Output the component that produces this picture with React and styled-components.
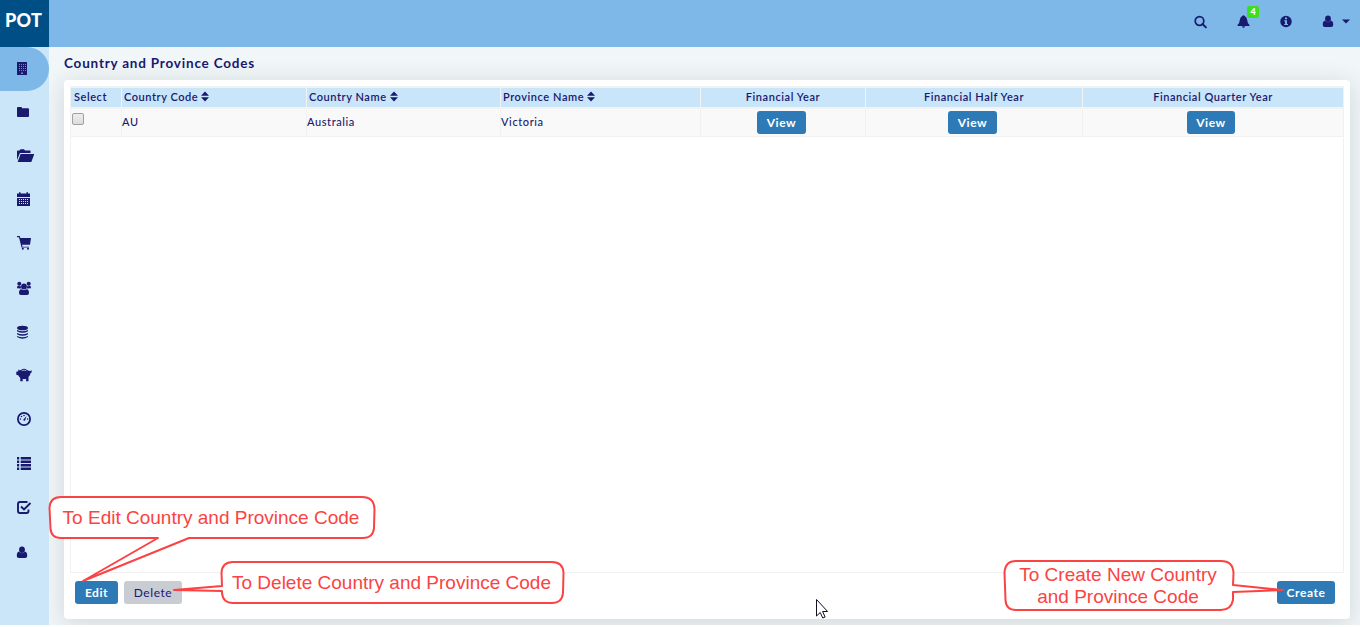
import React from 'react';
import styled, { createGlobalStyle } from 'styled-components';

const navy = '#191970';

const GlobalStyle = createGlobalStyle`
  * { box-sizing: border-box; }
  body { margin: 0; background: #fff; overflow: hidden; }
`;

const Page = styled.div`
  position: relative;
  width: 1360px;
  height: 627px;
  display: flex;
  flex-direction: column;
  overflow: hidden;
  border-bottom: 2px solid #fdfefe;
  font-family: Lato, sans-serif;
  font-size: 11px;
  letter-spacing: 0.6px;
  color: ${navy};
`;

const TopBar = styled.header`
  display: flex;
  flex: none;
  height: 47px;
  background: #7db8e8;
`;

const Brand = styled.div`
  width: 49px;
  padding: 8px 0 0 5px;
  background: #004e86;
  color: #fff;
  font-size: 18px;
  line-height: 24px;
  font-weight: 900;
  letter-spacing: 0.3px;
`;

const Tools = styled.div`
  display: flex;
  margin-left: auto;
  padding: 15px 10px 0 0;
`;

const Tool = styled.div`
  position: relative;
  display: flex;
  height: 14px;
  margin-left: ${(p) => p.$gap}px;
`;

const Badge = styled.span`
  position: absolute;
  left: 10px;
  top: -9px;
  width: 12px;
  height: 12px;
  border-radius: 2px;
  background: #3be01c;
  color: #fff;
  font-size: 9px;
  font-weight: 900;
  line-height: 11px;
  letter-spacing: 0;
  text-align: center;
`;

const Body = styled.div`
  display: flex;
  flex: 1;
  min-height: 0;
`;

const Sidebar = styled.nav`
  flex: none;
  width: 49px;
  background: #cbe6f9;
`;

const NavItem = styled.div`
  display: flex;
  height: 44px;
  padding: ${(p) => p.$top}px 0 0 16px;
  border-radius: 0 22px 22px 0;
  background: ${(p) => (p.$active ? '#7db8e8' : 'transparent')};
`;

const Main = styled.main`
  flex: 1;
  display: flex;
  flex-direction: column;
  padding: 8px 10px 6px 15px;
  background: #f1f6f9;
  overflow: hidden;
`;

const Title = styled.h1`
  margin: 0;
  height: 25px;
  font-size: 13.5px;
  line-height: 17px;
  font-weight: 700;
  letter-spacing: 0.8px;
`;

const Panel = styled.section`
  flex: 1;
  display: flex;
  flex-direction: column;
  padding: 6px 6px 0;
  border-radius: 4px;
  background: #fff;
  box-shadow: 0 4px 24px rgba(40, 60, 40, 0.16);
`;

const Grid = styled.div`
  height: 487px;
  border: 1px solid #f1f1f1;
`;

const Row = styled.div`
  display: grid;
  grid-template-columns: 51px 185px 194px 200px 165px 217px 1fr;
`;

const HeadRow = styled(Row)`
  height: 22px;
  border-top: 1px solid #f3f3f3;
  border-bottom: 2px solid #f3f3f3;
  background: #c9e5f9;
`;

const DataRow = styled(Row)`
  height: 28px;
  border-bottom: 1px solid #f1f1f1;
  background: #f9f9f9;
`;

const HeadCell = styled.div`
  display: flex;
  align-items: center;
  justify-content: ${(p) => (p.$center ? 'center' : 'flex-start')};
  gap: 3px;
  padding: 0 ${(p) => (p.$center ? 2 : 0)}px 2px 2px;
  border-right: 1px solid #f1f4f6;
  font-weight: 600;
  line-height: 17px;
  letter-spacing: 0.56px;
  white-space: nowrap;
  &:first-child { padding-left: 3px; }
  &:last-child { border-right: 0; }
`;

const Cell = styled.div`
  display: flex;
  align-items: ${(p) => (p.$center ? 'flex-start' : 'center')};
  justify-content: ${(p) => (p.$center ? 'center' : 'flex-start')};
  padding: ${(p) => (p.$center ? '2px 3px 0 0' : '0 0 2px')};
  border-right: 1px solid #f1f1f1;
  font-weight: 500;
  &:last-child { border-right: 0; padding-right: 4px; }
`;

const Check = styled.span`
  align-self: flex-start;
  width: 12px;
  height: 12px;
  margin: 4px 0 0 1px;
  border: 1px solid #a0a0a0;
  border-radius: 2px;
  background: linear-gradient(#eee, #dcdcdc);
`;

const Button = styled.button`
  width: ${(p) => p.$width}px;
  height: 23px;
  padding: 0;
  border: 0;
  border-radius: 3px;
  background: ${(p) => (p.$muted ? '#c9ccd3' : '#2e7ab6')};
  color: ${(p) => (p.$muted ? navy : '#fff')};
  font-family: Lato, sans-serif;
  font-size: 12px;
  font-weight: ${(p) => (p.$muted ? 400 : 700)};
  line-height: 23px;
  letter-spacing: 0.55px;
`;

const Actions = styled.div`
  display: flex;
  gap: 6px;
  padding: 8px 9px 0 5px;
  & > :last-child { margin-left: auto; }
`;

const Overlay = styled.svg`
  position: absolute;
  left: 0;
  top: 0;
  pointer-events: none;
`;

const Note = styled.div`
  position: absolute;
  left: ${(p) => p.$x}px;
  top: ${(p) => p.$y}px;
  width: ${(p) => p.$w}px;
  color: #fb4343;
  font-family: 'Liberation Sans', Arial, sans-serif;
  font-size: 19px;
  line-height: 22px;
  letter-spacing: 0;
  text-align: center;
  white-space: nowrap;
`;

const Icon = ({ w = 18, h = 16, children }) => (
  <svg width={w} height={h} viewBox={`0 0 ${w} ${h}`} fill={navy}>{children}</svg>
);

const Person = () => (
  <>
    <ellipse cx="6" cy="3.700" rx="2.900" ry="3.200" />
    <path d="M3.200 5.600C1.500 6 .8 7.400.8 9.700c0 1.500.8 2.200 2.100 2.200h6.200c1.300 0 2.100-.7 2.100-2.200 0-2.300-.7-3.700-2.400-4.100C7.500 7.900 4.500 7.900 3.200 5.600z" />
  </>
);

const nav = [
  [15, <><path d="M1 0h10v13H1z" /><path fill="#5f8fc6" d="M3 2h1v1H3zm2 0h1v1H5zm2 0h1v1H7zm2 0h1v1H9zM3 4h1v1H3zm2 0h1v1H5zm2 0h1v1H7zm2 0h1v1H9zM3 6h1v1H3zm2 0h1v1H5zm2 0h1v1H7zm2 0h1v1H9zM3 8h1v1H3zm2 0h1v1H5zm2 0h1v1H7zm2 0h1v1H9zM5 10.500h2V12H5z" /></>],
  [15, <path d="M1 2q0-1 1-1h3q1 0 1 1v.3h6q1 0 1 1V10q0 1-1 1H2q-1 0-1-1z" />],
  [13, <><path d="M1 3.500q0-1 1-1h1.500l1-1.300h3.500l1 1.300h5.500V5H4L1 12z" /><path d="M4.600 6H18.300l-3 8H1.600z" /></>],
  [13, <><path d="M1 1.500h13V5H1zM3 .3h1.500V3H3zm7.500 0H12V3h-1.500z" /><path fillRule="evenodd" d="M1 6h13v8H1zM3 7v1h1V7zm2 0v1h1V7zm2 0v1h1V7zm2 0v1h1V7zm2 0v1h1V7zM3 9v1h1V9zm2 0v1h1V9zm2 0v1h1V9zm2 0v1h1V9zm2 0v1h1V9zM3 11v1h1v-1zm2 0v1h1v-1zm2 0v1h1v-1zm2 0v1h1v-1zm2 0v1h1v-1z" /></>],
  [13, <><path d="M1 0h2.700l.7 2H15l-1 6.700H6l.5 2H13v.9H5.500L3 1.200H1z" /><circle cx="6.800" cy="12.700" r="1" /><circle cx="12" cy="12.700" r="1" /></>],
  [14, <><circle cx="8" cy="5.400" r="2.900" /><circle cx="3.300" cy="2.800" r="2" /><circle cx="12.700" cy="2.800" r="2" /><path d="M1 7.200q0-2.400 1.300-2.400 1.500.8 2.500.2 0 1.500.8 2.500zM15 7.200q0-2.400-1.300-2.400-1.500.8-2.500.2 0 1.500-.8 2.500zM5.300 8.200Q8 9.700 10.700 8.200 13 8.400 13 12q0 2-2 2H5q-2 0-2-2 0-3.600 2.300-3.800z" /></>],
  [14, <><ellipse cx="6.500" cy="3" rx="5.500" ry="2.300" /><path d="M1 5q5.500 2.700 11 0v1.200q-5.500 3.300-11 0zM1 8q5.500 2.700 11 0v1.200q-5.500 3.300-11 0zM1 11q5.500 2.700 11 0v1q-5.500 3.400-11 0z" /></>],
  [13, <><path d="M3 2.300 5 2Q8-.2 11 1.900l1.800.9 1.300.3q.7-1.100 1.900-.4l-.5.500q.7 1.400-1 1.800-.1 2.700-2 3.900v4.300h-2.400V11H6.700v2.200H4.300V10Q3 8.600 2.500 7.400L.3 6.800v-3l2-.6L2.200 1z" /><path d="M5.700 2.700q2.300-1.200 4.600 0" stroke="#cbe6f9" strokeWidth=".7" fill="none" /></>],
  [13, <><circle cx="8" cy="7" r="6.100" fill="none" stroke={navy} strokeWidth="1.800" /><circle cx="4.400" cy="7" r=".8" /><circle cx="5.500" cy="4.500" r=".8" /><circle cx="8" cy="3.500" r=".8" /><circle cx="11.600" cy="7" r=".8" /><path d="M7.200 7.700 10.500 4l-1.400 4.500q-1.500 1-1.900-.8z" /></>],
  [13, <path d="M1 1h2.200v2.500H1zm3.700 0H15v2.500H4.700zM1 4.500h2.200V7H1zm3.700 0H15V7H4.700zM1 8h2.200v2.500H1zm3.700 0H15v2.500H4.700zM1 11.500h2.200V14H1zm3.700 0H15V14H4.700z" />],
  [13, <path fill="none" stroke={navy} strokeWidth="1.900" d="M11.500 2H4Q2 2 2 4v7q0 2 2 2h6.500q2 0 2-2V9.500M5 6.500 8 9.500 14.500 3" />],
  [15, <Person />],
];

const SortIcon = () => (
  <svg width="8" height="11" viewBox="0 0 8 11" fill={navy}>
    <path d="M0 4.700 4 .500l4 4.200zM0 6.300h8L4 10.500z" />
  </svg>
);

const heads = [
  ['Select'], ['Country Code', 'sort'], ['Country Name', 'sort'], ['Province Name', 'sort'],
  ['Financial Year', 'center'], ['Financial Half Year', 'center'], ['Financial Quarter Year', 'center'],
];

export default function App() {
  return (
    <Page>
      <GlobalStyle />
      <TopBar>
        <Brand>POT</Brand>
        <Tools>
          <Tool>
            <Icon w={13} h={14}>
              <circle cx="5.500" cy="6" r="4.300" fill="none" stroke={navy} strokeWidth="1.700" />
              <path d="m8.500 9 3.400 3.400" stroke={navy} strokeWidth="1.900" strokeLinecap="round" />
            </Icon>
          </Tool>
          <Tool $gap={30}>
            <Icon w={13} h={14}>
              <path d="M5.500.8q1-1.300 2 0Q10 2 10.200 5q.2 3.500 2.300 5v1H.5v-1q2.100-1.500 2.300-5Q3 2 5.500.8zM5 11.300h3Q7.800 12.800 6.500 12.800T5 11.300z" />
            </Icon>
            <Badge>4</Badge>
          </Tool>
          <Tool $gap={30}>
            <Icon w={12} h={14}>
              <circle cx="6" cy="6.500" r="5.700" />
              <path fill="#7db8e8" d="M5 2.500h2v1.700H5zM4.200 5.200H7v3.700h1v1.200H4.200V8.900h.9V6.400h-.9z" />
            </Icon>
          </Tool>
          <Tool $gap={30}><Icon w={12} h={14}><Person /></Icon></Tool>
          <Tool $gap={8}><Icon w={8} h={14}><path d="M0 4.500h8L4 8.500z" /></Icon></Tool>
        </Tools>
      </TopBar>
      <Body>
        <Sidebar>
          {nav.map(([top, drawing], i) => (
            <NavItem key={i} $top={top} $active={i === 0}><Icon>{drawing}</Icon></NavItem>
          ))}
        </Sidebar>
        <Main>
          <Title>Country and Province Codes</Title>
          <Panel>
            <Grid>
              <HeadRow>
                {heads.map(([label, kind]) => (
                  <HeadCell key={label} $center={kind === 'center'}>
                    {label}{kind === 'sort' && <SortIcon />}
                  </HeadCell>
                ))}
              </HeadRow>
              <DataRow>
                <Cell><Check /></Cell>
                <Cell>AU</Cell>
                <Cell>Australia</Cell>
                <Cell>Victoria</Cell>
                <Cell $center><Button $width={49}>View</Button></Cell>
                <Cell $center><Button $width={49}>View</Button></Cell>
                <Cell $center><Button $width={48}>View</Button></Cell>
              </DataRow>
            </Grid>
            <Actions>
              <Button $width={43}>Edit</Button>
              <Button $width={58} $muted>Delete</Button>
              <Button $width={58}>Create</Button>
            </Actions>
          </Panel>
        </Main>
      </Body>
      <Overlay width="1360" height="627" fill="#fff" stroke="#fb4343" strokeWidth="2" strokeLinejoin="round">
        <path d="M61 497H362Q374 497 374.500 509L374 528Q373 538 363 538H189L83 581 158 538H61Q51 538 50.500 528L49.500 508Q50 497 61 497z" />
        <path d="M233 562H552Q563 562 563.500 573L563 593Q562 603 552 603H233Q223 603 222 593V591L174 590 222 586 221.500 573Q222 562 233 562z" />
        <path d="M1016 561H1221Q1233 561 1233.500 573L1233 585 1283 590 1233 592V600Q1231 610 1221 610H1016Q1006 610 1005.500 600L1004.500 573Q1005 561 1016 561z" />
        <path d="M816.500 599.500V616l3.700-3.500 2.600 5.500 2.300-1-2.500-5.500h5z" stroke="#101020" strokeWidth="1" />
      </Overlay>
      <Note $x={62} $y={507} $w={298}>To Edit Country and Province Code</Note>
      <Note $x={231} $y={572} $w={321}>To Delete Country and Province Code</Note>
      <Note $x={1018} $y={564} $w={200}>To Create New Country<br />and Province Code</Note>
    </Page>
  );
}
